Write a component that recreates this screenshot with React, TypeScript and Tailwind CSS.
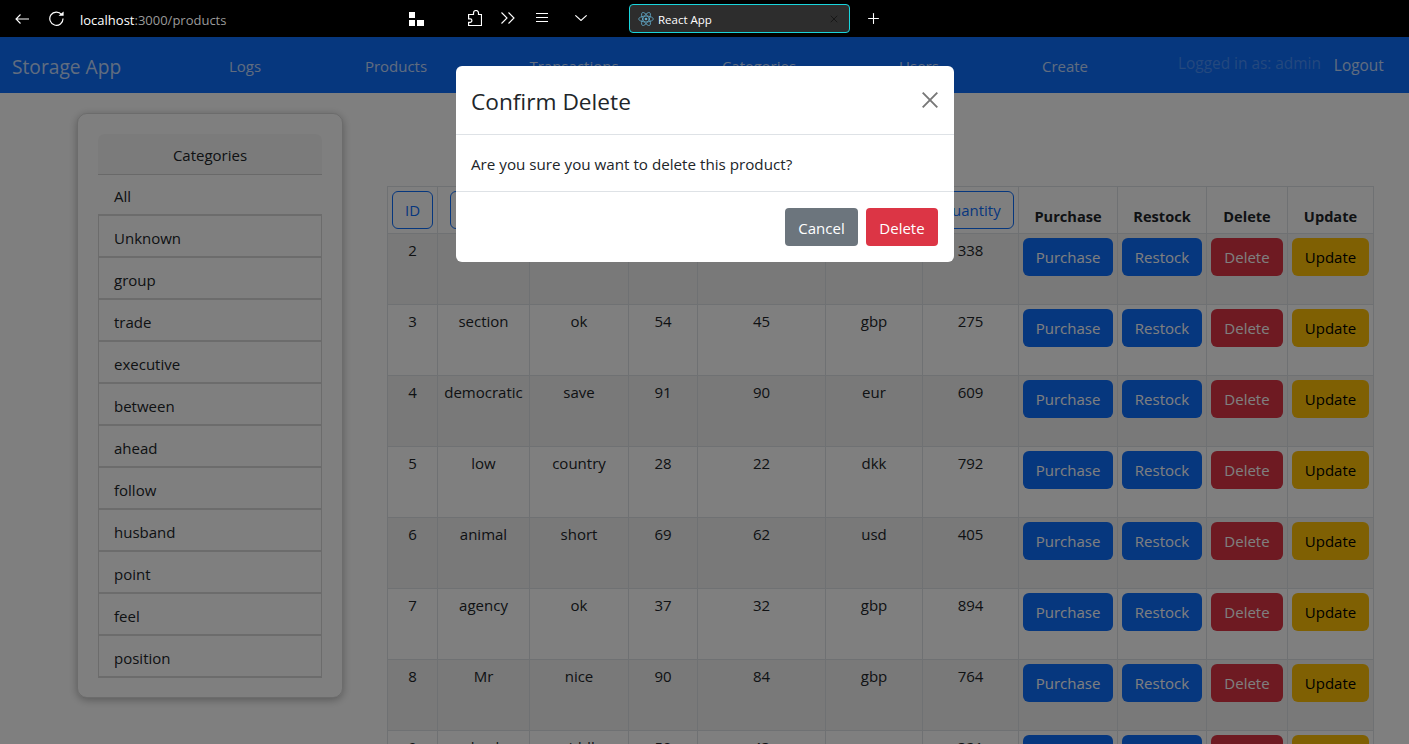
import React from "react";
import { X, Plus } from "lucide-react";

const categories = ["Unknown", "group", "trade", "executive", "between", "ahead", "follow", "husband", "point", "feel", "position"];
const rows = [
  ["2", "human", "ok", "60", "52", "usd", "338"],
  ["3", "section", "ok", "54", "45", "gbp", "275"],
  ["4", "democratic", "save", "91", "90", "eur", "609"],
  ["5", "low", "country", "28", "22", "dkk", "792"],
  ["6", "animal", "short", "69", "62", "usd", "405"],
  ["7", "agency", "ok", "37", "32", "gbp", "894"],
  ["8", "Mr", "nice", "90", "84", "gbp", "764"],
  ["9", "check", "middle", "50", "43", "eur", "321"],
];
const widths = [50, 92, 99, 69, 128, 97, 96, 99, 89, 81, 86];
const sortHeads = ["ID", "Name", "Category", "Price", "Sale price", "Currency", "Quantity"];

function Btn({ label, cls }: { label: string; cls: string }) {
  return <button className={`h-[38px] w-full rounded-[6px] text-[15px] ${cls}`}>{label}</button>;
}

export default function App() {
  return (
    <div className="h-screen overflow-hidden flex flex-col bg-white text-[15px] text-[#212529]" style={{ fontFamily: '"Open Sans", "Noto Sans", sans-serif' }}>
      <div className="h-[37px] shrink-0 bg-black flex items-center text-white relative">
        <svg className="ml-[15px]" width="14" height="10" viewBox="0 0 14 10" fill="none" stroke="white" strokeWidth="1.1"><path d="M14 5H1M5.5 0.5L1 5l4.5 4.5" /></svg>
        <svg className="ml-[20px]" width="15" height="15" viewBox="0 0 15 15" fill="none" stroke="white" strokeWidth="1.2"><path d="M12.6 3.6A6.6 6.6 0 1 0 14 7.5" /><path d="M9.5 4.8L14.6 0.4V4.8Z" fill="white" stroke="none" /></svg>
        <span className="ml-[16px] pt-[4px] text-[13px] w-[329px]">localhost<span className="text-[#9a9a9a]">:3000/products</span></span>
        <svg width="15" height="14" viewBox="0 0 15 14" fill="white"><rect x="0" y="0" width="6" height="6" /><rect x="0" y="8" width="6" height="6" /><rect x="8" y="8" width="7" height="6" /></svg>
        <svg className="ml-[44px] -mt-[2px]" width="14" height="16" viewBox="0 0 14 16" fill="none" stroke="white" strokeWidth="1.2"><path d="M5.5 4.5V3a2.5 2.5 0 0 1 5 0v1.5h3v11H0.6v-3.2h1.6a1.7 1.7 0 0 0 0-3.4H0.6V4.5Z" /></svg>
        <svg className="ml-[19px] -mt-[1px]" width="14" height="12" viewBox="0 0 14 12" fill="none" stroke="white" strokeWidth="1.1"><path d="M0.5 0.5L6 6l-5.5 5.5M7.5 0.5L13 6l-5.5 5.5" /></svg>
        <svg className="ml-[21px] -mt-[2px]" width="12" height="9" viewBox="0 0 12 9" fill="none" stroke="white" strokeWidth="1"><path d="M0 0.5H12M0 4.5H12M0 8.5H12" /></svg>
        <svg className="ml-[27px] -mt-[1px]" width="12" height="6" viewBox="0 0 12 6" fill="none" stroke="white" strokeWidth="1.1"><path d="M0.3 0.3L6 5.5l5.7-5.2" /></svg>
        <div className="ml-[42px] w-[221px] h-[29px] rounded-[4px] border border-[#19d5dd] bg-[#2d2d2d] flex items-center px-[8px]">
          <svg width="16" height="16" viewBox="-12 -12 24 24" fill="none" stroke="#61a8c8" strokeWidth="1.2">
            <circle r="2" fill="#61a8c8" stroke="none" />
            <ellipse rx="11" ry="4.4" />
            <ellipse rx="11" ry="4.4" transform="rotate(60)" />
            <ellipse rx="11" ry="4.4" transform="rotate(120)" />
          </svg>
          <span className="ml-[4px] pt-[2px] text-[11.5px] flex-1">React App</span>
          <X size={12} strokeWidth={1.5} className="text-[#101010] mr-[1px]" />
        </div>
        <Plus size={17} strokeWidth={1.5} className="ml-[15px]" />
      </div>

      <div className="relative flex-1 min-h-0 overflow-hidden">
        <nav className="h-[56px] bg-[#0d6efd] flex items-center pt-[2px]">
          <span className="w-[168px] pl-[12px] pt-[2px] text-[19.2px] text-white/75">Storage App</span>
          {[["Logs", "w-[154px]"], ["Products", "w-[148px]"], ["Transactions", "w-[208px]"], ["Categories", "w-[162px]"], ["Users", "w-[158px]"], ["Create", "w-[134px]"]].map(([t, w]) => (
            <a key={t} className={`${w} text-center text-white/75`}>{t}</a>
          ))}
          <span className="ml-[46px] -mt-[4px] text-[15.4px] text-white/25 whitespace-nowrap">Logged in as: admin</span>
          <a className="ml-[13px] text-[15.4px] text-white/75">Logout</a>
        </nav>

        <div className="flex items-start">
          <aside className="ml-[77px] mt-[20px] w-[266px] h-[585px] shrink-0 rounded-[10px] border border-black/15 shadow-[0_2px_8px_rgba(0,0,0,0.3)] p-[20px]">
            <div className="h-[41px] pt-[2px] bg-black/[0.03] border-b border-black/15 rounded-t-[6px] flex items-center justify-center">Categories</div>
            <div className="h-[41px] pl-[16px] pt-[3px] flex items-center border-b-2 border-black/15">All</div>
            {categories.map((c) => (
              <div key={c} className="h-[42px] pl-[15px] pt-[5px] flex items-center border border-t-0 border-black/15 border-b-2">{c}</div>
            ))}
          </aside>

          <table className="ml-[44px] mt-[93px] w-[986px] table-fixed border-collapse shrink-0">
            <colgroup>
              {widths.map((w, i) => <col key={i} style={{ width: w }} />)}
            </colgroup>
            <thead>
              <tr className="h-[47px]">
                {sortHeads.map((h) => (
                  <th key={h} className="border border-[#dee2e6] p-[4px] font-normal text-center">
                    <button className={`h-[38px] whitespace-nowrap rounded-[6px] border border-[#0d6efd] text-[#0d6efd] ${h === "ID" || h === "Quantity" ? "w-full" : "px-[12px]"}`}>{h}</button>
                  </th>
                ))}
                {["Purchase", "Restock", "Delete", "Update"].map((h) => (
                  <th key={h} className="border border-[#dee2e6] align-bottom p-[4px] pb-[5px] font-bold text-center text-[14.6px]">{h}</th>
                ))}
              </tr>
            </thead>
            <tbody>
              {rows.map((r, i) => (
                <tr key={r[0]} className={`h-[71px] ${i % 2 === 0 ? "bg-black/5" : ""}`}>
                  {r.map((c, j) => (
                    <td key={j} className="border border-[#dee2e6] align-top text-center p-[4px] pt-[5px]">{c}</td>
                  ))}
                  <td className="border border-[#dee2e6] align-top p-[4px]"><Btn label="Purchase" cls="bg-[#0d6efd] text-white" /></td>
                  <td className="border border-[#dee2e6] align-top p-[4px]"><Btn label="Restock" cls="bg-[#0d6efd] text-white" /></td>
                  <td className="border border-[#dee2e6] align-top p-[4px]"><Btn label="Delete" cls="bg-[#dc3545] text-white" /></td>
                  <td className="border border-[#dee2e6] align-top p-[4px]"><Btn label="Update" cls="bg-[#ffc107] text-black" /></td>
                </tr>
              ))}
            </tbody>
          </table>
        </div>

        <div className="absolute inset-0 bg-black/50" />
        <div className="absolute left-[456px] top-[29px] w-[498px] rounded-[6px] bg-white flex flex-col">
          <div className="h-[69px] border-b border-[#dee2e6] flex items-center justify-between pl-[15px] pr-[16px]">
            <span className="text-[22.7px] pt-[4px]">Confirm Delete</span>
            <svg width="16" height="16" viewBox="0 0 16 16" fill="none" stroke="#777" strokeWidth="1.9"><path d="M0.7 0.7L15.3 15.3M15.3 0.7L0.7 15.3" /></svg>
          </div>
          <div className="h-[57px] border-b border-[#dee2e6] flex items-center pl-[15px] pr-[16px] pt-[2px] text-[15.2px]">Are you sure you want to delete this product?</div>
          <div className="h-[70px] flex items-start justify-end gap-[8px] pt-[16px] pr-[16px]">
            <button className="h-[38px] w-[73px] pt-[2px] rounded-[4px] bg-[#6c757d] text-white">Cancel</button>
            <button className="h-[38px] w-[72px] pt-[2px] rounded-[4px] bg-[#dc3545] text-white">Delete</button>
          </div>
        </div>
      </div>
    </div>
  );
}
